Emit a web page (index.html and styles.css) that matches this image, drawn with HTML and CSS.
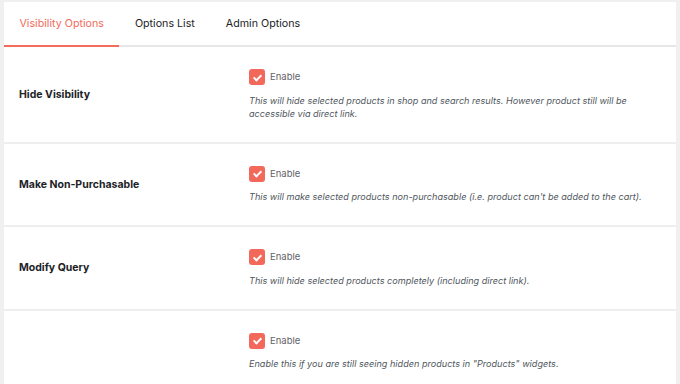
FILE: index.html
```html
<!DOCTYPE html>
<html lang="en">
<head>
    <meta charset="UTF-8">
    <title>Visibility Options</title>
    <link rel="stylesheet" href="styles.css">
</head>
<body>
    <div class="panel">
        <div class="tabs">
            <div class="tab active">Visibility Options</div>
            <div class="tab">Options List</div>
            <div class="tab">Admin Options</div>
        </div>

        <div class="row">
            <div class="label">Hide Visibility</div>
            <div class="field">
                <label class="check"><span class="box"></span>Enable</label>
                <p class="desc">This will hide selected products in shop and search results. However product still will be accessible via direct link.</p>
            </div>
        </div>
        <div class="row">
            <div class="label">Make Non-Purchasable</div>
            <div class="field">
                <label class="check"><span class="box"></span>Enable</label>
                <p class="desc">This will make selected products non-purchasable (i.e. product can't be added to the cart).</p>
            </div>
        </div>
        <div class="row">
            <div class="label">Modify Query</div>
            <div class="field">
                <label class="check"><span class="box"></span>Enable</label>
                <p class="desc">This will hide selected products completely (including direct link).</p>
            </div>
        </div>
        <div class="row">
            <div class="label"></div>
            <div class="field">
                <label class="check"><span class="box"></span>Enable</label>
                <p class="desc">Enable this if you are still seeing hidden products in "Products" widgets.</p>
            </div>
        </div>
    </div>
</body>
</html>
```

FILE: styles.css
```css
body {
    margin: 0;
    background: #f0f0f1;
    font-family: Inter, "Noto Sans", sans-serif;
    color: #1d2327;
    height: 384px;
    overflow: hidden;
}
.panel {
    background: #fff;
    margin: 2px 4px 0 4px;
    min-height: 400px;
}
.tabs {
    display: flex;
    border-bottom: 2px solid #e6e6e6;
    height: 43px;
}
.tab {
    padding: 0 15.5px;
    font-size: 10.7px;
    line-height: 43px;
    color: #1d2327;
}
.tab.active {
    color: #f26b5b;
    box-shadow: inset 0 -2px 0 #f26b5b;
    height: 45px;
    margin-bottom: -2px;
}
.row {
    display: flex;
    align-items: center;
    border-bottom: 2px solid #eeeeee;
    padding: 22px 0;
}
.label {
    box-sizing: border-box;
    width: 245px;
    padding-left: 15px;
    font-size: 10.5px;
    font-weight: 700;
    color: #1d2327;
}
.field {
    flex: 1;
}
.check {
    display: flex;
    align-items: center;
    font-size: 9.5px;
    color: #5f6368;
    line-height: 16px;
}
.box {
    width: 16px;
    height: 16px;
    border-radius: 3px;
    background: #f2685a;
    margin-right: 5px;
    position: relative;
}
.box::after {
    content: "";
    position: absolute;
    left: 5.5px;
    top: 3.5px;
    width: 3px;
    height: 6px;
    border: solid #fff;
    border-width: 0 2px 2px 0;
    transform: rotate(45deg);
}
.desc {
    margin: 8.5px 0 0;
    max-width: 410px;
    font-size: 9.1px;
    font-style: italic;
    line-height: 13px;
    color: #50575e;
}
```
